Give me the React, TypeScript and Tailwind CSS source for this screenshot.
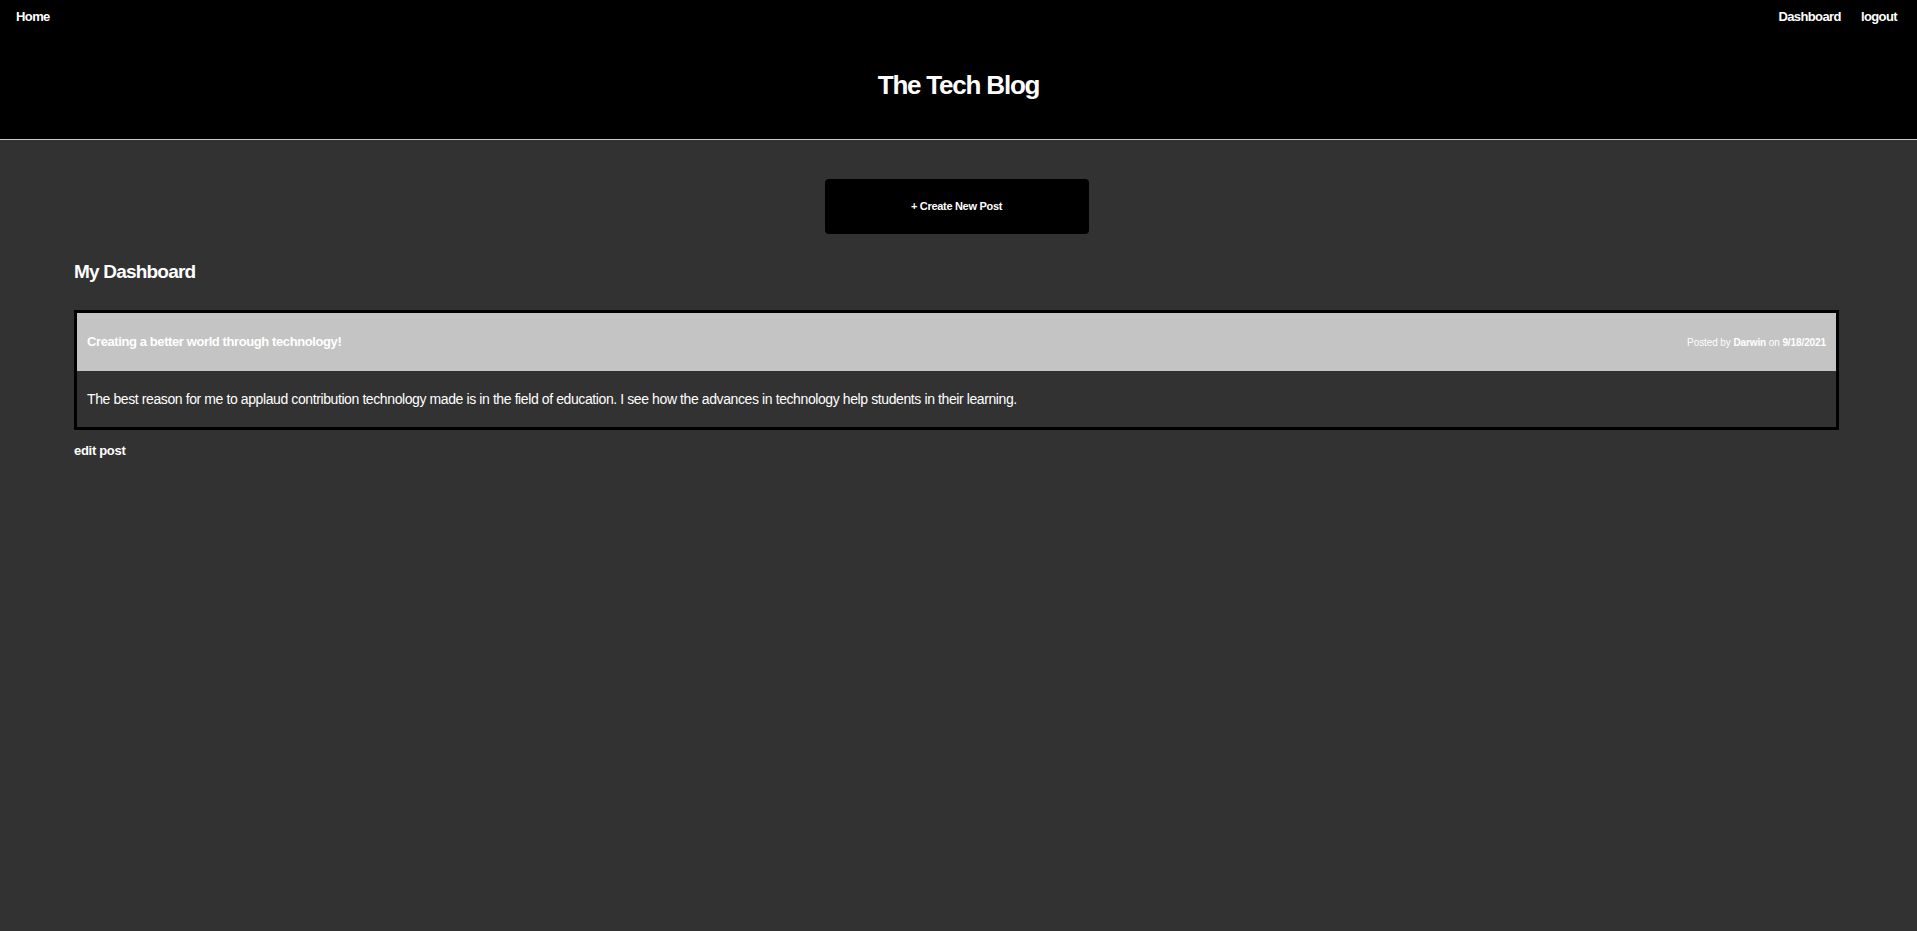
import React from "react";

const font = { fontFamily: '"Liberation Sans", Arial, sans-serif' };

export default function App() {
  return (
    <div className="min-h-[931px] bg-[#323232] text-white" style={font}>
      <header className="bg-black border-b border-[#c8c8c8] h-[140px] flex flex-col">
        <nav className="flex justify-between items-center h-[34px] pl-[16px] pr-[20px] text-[13px] font-bold tracking-[-0.6px]">
          <a className="text-white">Home</a>
          <div className="flex gap-[20px]">
            <a className="text-white">Dashboard</a>
            <a className="text-white">logout</a>
          </div>
        </nav>
        <h1 className="text-center text-[26px] font-bold mt-[34px] leading-[34px] tracking-[-1.2px]">The Tech Blog</h1>
      </header>
      <main className="pl-[74px] pr-[78px]">
        <div className="flex justify-center pt-[39px]">
          <button className="w-[264px] h-[55px] bg-black rounded-[4px] text-white text-[11px] font-bold tracking-[-0.3px]">+ Create New Post</button>
        </div>
        <h2 className="text-[19px] font-bold mt-[24px] leading-[28px] tracking-[-0.8px]">My Dashboard</h2>
        <div className="mt-[24px] border-[3px] border-black">
          <div className="bg-[#c4c4c4] h-[58px] flex items-center justify-between px-[10px]">
            <span className="text-[13px] font-bold tracking-[-0.4px]">Creating a better world through technology!</span>
            <span className="text-[10px] tracking-[-0.1px]">Posted by <b>Darwin</b> on <b>9/18/2021</b></span>
          </div>
          <div className="h-[56px] flex items-center px-[10px] text-[14px] tracking-[-0.4px]">
            The best reason for me to applaud contribution technology made is in the field of education. I see how the advances in technology help students in their learning.
          </div>
        </div>
        <a className="block mt-[11px] text-[13px] leading-[20px] font-bold tracking-[-0.3px]">edit post</a>
      </main>
    </div>
  );
}
